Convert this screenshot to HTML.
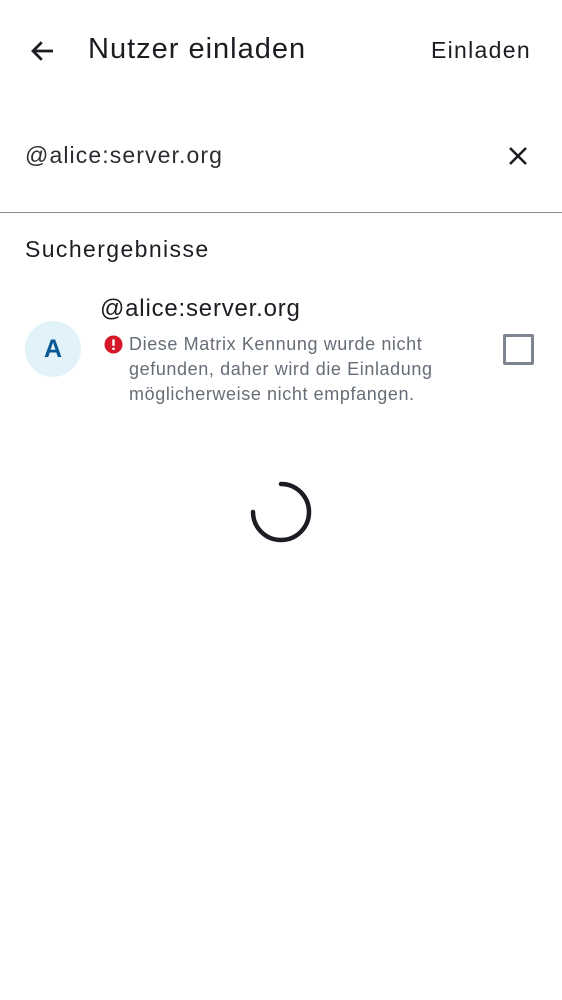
<!DOCTYPE html>
<html><head><meta charset="utf-8"><style>
body{margin:0;width:562px;height:1000px;background:#fff;font-family:"Liberation Sans",sans-serif;color:#1b1d22;position:relative;overflow:hidden}
.a{position:absolute;white-space:nowrap}
</style></head><body>
<svg class="a" style="left:28px;top:36px" width="30" height="30" viewBox="0 0 24 24"><path d="M20 12H5M11 5l-7 7 7 7" fill="none" stroke="#1b1d22" stroke-width="2.2"/></svg>
<div class="a" style="left:88px;top:33px;font-size:29px;letter-spacing:1px">Nutzer einladen</div>
<div class="a" style="left:431px;top:37px;font-size:23px;letter-spacing:1.3px">Einladen</div>
<div class="a" style="left:25px;top:142px;font-size:23px;letter-spacing:1.1px;color:#2b2d32">@alice:server.org</div>
<svg class="a" style="left:506px;top:144px" width="24" height="24" viewBox="0 0 24 24"><path d="M4 4L20 20M20 4L4 20" stroke="#1b1d22" stroke-width="2.6"/></svg>
<div class="a" style="left:0;top:212px;width:562px;height:1px;background:#8a8d92"></div>
<div class="a" style="left:25px;top:236px;font-size:23px;letter-spacing:1.4px">Suchergebnisse</div>
<div class="a" style="left:25px;top:321px;width:56px;height:56px;border-radius:50%;background:#e1f3f8;color:#0a5796;font-weight:bold;font-size:25px;text-align:center;line-height:56px">A</div>
<div class="a" style="left:100px;top:295px;font-size:24px;letter-spacing:0.8px">@alice:server.org</div>
<svg class="a" style="left:104px;top:335px" width="19" height="19" viewBox="0 0 20 20"><circle cx="10" cy="10" r="9.5" fill="#d51928"/><rect x="8.7" y="4.5" width="2.6" height="7" rx="1" fill="#fff"/><circle cx="10" cy="14.5" r="1.4" fill="#fff"/></svg>
<div class="a" style="left:129px;top:332px;font-size:18px;line-height:25px;color:#656d77;letter-spacing:0.6px">Diese Matrix Kennung wurde nicht<br>gefunden, daher wird die Einladung<br>möglicherweise nicht empfangen.</div>
<div class="a" style="left:503px;top:334px;width:31px;height:31px;border:3px solid #7e8590;border-radius:2px;box-sizing:border-box"></div>
<svg class="a" style="left:246px;top:477px" width="70" height="70" viewBox="0 0 70 70"><path d="M35 7A28 28 0 1 1 7 35" fill="none" stroke="#1b1d22" stroke-width="4.5" stroke-linecap="round"/></svg>
</body></html>
